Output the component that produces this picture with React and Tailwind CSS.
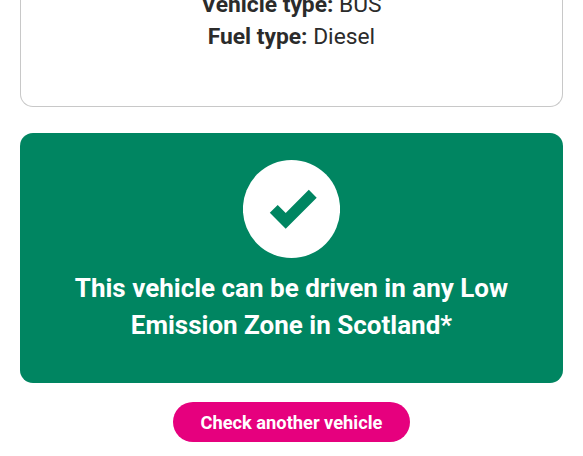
const vehicle = [
  { label: "Vehicle type:", value: "BUS" },
  { label: "Fuel type:", value: "Diesel" },
];

function VehicleDetails() {
  return (
    <div className="h-[107px] rounded-b-[13px] border-x border-b border-[#c8c8c8] flex flex-col items-center overflow-hidden">
      <div className="-mt-[11px] text-center text-[22.8px] leading-[32.4px] text-[#2b2b2b]">
        {vehicle.map((item) => (
          <p key={item.label}>
            <strong className="font-bold">{item.label}</strong> {item.value}
          </p>
        ))}
      </div>
    </div>
  );
}

function ResultPanel() {
  return (
    <div className="mt-[26px] h-[250px] rounded-[13px] bg-[#008561] flex flex-col items-center pt-[27px]">
      <svg viewBox="0 0 97.5 98" className="h-[98px] w-[97.5px]">
        <ellipse cx="48.5" cy="49" rx="48.6" ry="49" fill="#fff" />
        <path
          d="M26.8 52.7 34.7 44.9 42.7 52.9 65.8 29.8 73.7 37.7 42.7 68.8Z"
          fill="#008561"
        />
      </svg>
      <h2 className="mt-[12px] text-center text-[26px] leading-[37px] font-bold text-white">
        This vehicle can be driven in any Low
        <br />
        Emission Zone in Scotland*
      </h2>
    </div>
  );
}

export default function App() {
  return (
    <div className="h-[456px] overflow-hidden bg-white pl-[19.7px] pr-[19.8px] font-[Roboto,sans-serif]">
      <VehicleDetails />
      <ResultPanel />
      <div className="mt-[19.3px] flex justify-center">
        <button className="h-[40px] w-[236.4px] rounded-full bg-[#e6007e] text-[18.25px] font-bold text-white">
          Check another vehicle
        </button>
      </div>
    </div>
  );
}
